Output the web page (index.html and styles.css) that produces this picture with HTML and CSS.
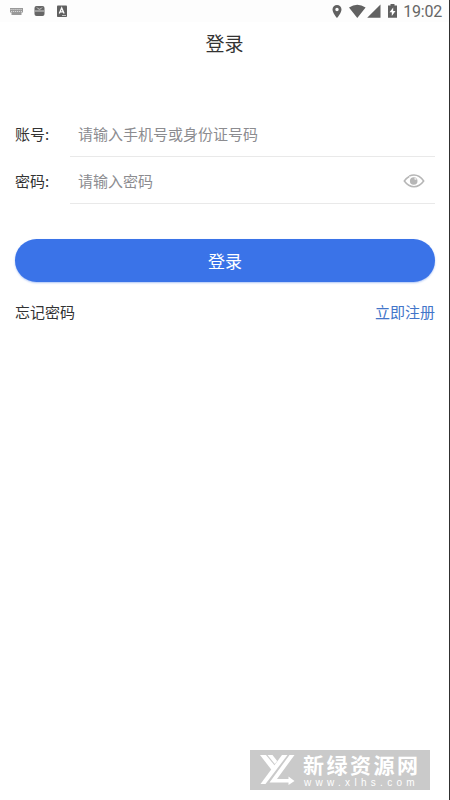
FILE: index.html
```html
<!DOCTYPE html>
<html lang="zh-CN">
<head>
<meta charset="utf-8">
<title>登录</title>
<link rel="stylesheet" href="styles.css">
</head>
<body>
<div class="screen">
  <header class="status">
    <svg class="notices" width="70" height="22" viewBox="0 0 70 22">
      <path fill="#999" d="M10 8h13v4.500h-1.500v2.500h-10v-2.500H10z"/>
      <path stroke="#fff" stroke-width=".6" stroke-dasharray="1.200 .8" d="M10.500 9.500h12M11 11.500h11"/>
      <rect x="34.500" y="6" width="10" height="10" rx="2" fill="#666"/>
      <path fill="none" stroke="#ddd" stroke-width=".9" d="M37 7.500q2.500 3.500 5 0M35 11h9"/>
      <rect x="57" y="5.500" width="10" height="11.500" rx=".8" fill="#606060"/>
      <path fill="none" stroke="#fff" stroke-width="1.300" d="M59.300 13.500 61.700 8l2.400 5.500M60.200 11.800h3"/>
      <path stroke="#ddd" stroke-width=".8" d="M62 15.500h4"/>
    </svg>
    <div class="system">
      <svg width="68" height="22" viewBox="332 0 68 22" fill="#616161">
        <path fill-rule="evenodd" d="M337 5a4.500 4.500 0 0 0-4.500 4.500c0 3.300 4.500 8.500 4.500 8.500s4.500-5.200 4.500-8.500A4.500 4.500 0 0 0 337 5m0 2.800a1.700 1.700 0 1 1 0 3.400 1.700 1.700 0 0 1 0-3.400"/>
        <path d="M349 7.500q8.300-5.700 16.600 0L357.300 18zM380.500 4.500v13.300H367.200z"/>
        <path d="M388 5.500h2.500V4h4v1.500h2.500v12.300h-9z"/>
        <path fill="#fff" d="m393.200 7.500-3.700 4.700h2.300v3.800l3.700-5h-2.300z"/>
      </svg>
      <span class="clock">19:02</span>
    </div>
  </header>
  <h1 class="title">登录</h1>
  <form class="form">
    <div class="row">
      <label class="label">账号:</label>
      <div class="field">请输入手机号或身份证号码</div>
    </div>
    <div class="row">
      <label class="label">密码:</label>
      <div class="field">请输入密码
        <svg class="eye" width="22" height="16" viewBox="0 0 22 16">
          <path fill="none" stroke="#b6b6b6" stroke-width="1.500" d="M6.200 3.500Q3.400 5.100 1.300 8q4.100 5.700 9.700 5.700T20.700 8Q16.600 2 11 2q-2.400 0-4.700 1"/>
          <circle cx="10.700" cy="8" r="3.800" fill="#b6b6b6"/>
          <circle cx="12.500" cy="5.800" r="1.200" fill="#e6e6e6"/>
        </svg>
      </div>
    </div>
    <button class="submit" type="button">登录</button>
  </form>
  <nav class="links"><span>忘记密码</span><span class="register">立即注册</span></nav>
  <aside class="watermark">
    <svg width="36" height="32" viewBox="0 0 36 32" fill="#fff">
      <path d="M0 1h6L15.500 12.500l-3.500 4z"/>
      <path d="M7.500 1h5l4.700 6-2.400 3z"/>
      <path d="M22 1h5.500L5.500 30H.5z"/>
      <path d="M29.500 1h5L17 25h11.500V22.500l6 4.500-6 4v-2.500H9.500z"/>
    </svg>
    <div class="brand">
      <div class="brand-name">新绿资源网</div>
      <div class="brand-url">www.xlhs.com</div>
    </div>
  </aside>
</div>
</body>
</html>
```
FILE: styles.css
```css
* {
  box-sizing: border-box;
}

body {
  margin: 0;
  background: #fff;
  font-family: "Noto Sans CJK SC", sans-serif;
  color: #333;
}

.screen {
  display: flex;
  flex-direction: column;
  width: 450px;
  height: 800px;
  border-right: 1px solid #303030;
  overflow: hidden;
}

.status {
  display: flex;
  justify-content: space-between;
  height: 22px;
  background: #fdfdfd;
}

.system {
  display: flex;
  gap: 3px;
  padding-right: 7px;
}

.system svg {
  overflow: visible;
}

.clock {
  font: 16px/23px Roboto, sans-serif;
  letter-spacing: -0.2px;
  color: #666;
}

.title {
  margin: 0;
  height: 42px;
  font-size: 19px;
  font-weight: 400;
  line-height: 42px;
  text-align: center;
}

.form {
  display: flex;
  flex-direction: column;
  padding: 46px 14px 0 15px;
}

.row {
  display: flex;
  height: 47px;
  font-size: 15px;
  line-height: 48px;
}

.label {
  width: 55px;
}

.field {
  display: flex;
  flex: 1;
  align-items: center;
  justify-content: space-between;
  padding: 2px 10px 0 8px;
  border-bottom: 1px solid #e9e9e9;
  color: #8c8c90;
}

.submit {
  height: 43px;
  margin: 35px 0 0;
  padding: 0;
  border: 0;
  border-radius: 22px;
  background: #3a73e8;
  box-shadow: 0 1px 2px #3a73e866;
  color: #fff;
  font: 17px/43px "Noto Sans CJK SC", sans-serif;
}

.links {
  display: flex;
  justify-content: space-between;
  padding: 18px 14px 0 15px;
  font-size: 15px;
  line-height: 24px;
}

.register {
  color: #4275c9;
}

.watermark {
  display: flex;
  gap: 7px;
  width: 180px;
  height: 40px;
  margin: auto 19px 10px auto;
  padding: 4px 0 0 10px;
  background: #cacaca;
  color: #fff;
}

.brand-name {
  height: 24px;
  font-size: 21px;
  font-weight: 700;
  line-height: 20px;
  letter-spacing: 2.5px;
}

.brand-url {
  font: 10px/9px "Liberation Sans", sans-serif;
  letter-spacing: 4.3px;
  padding-left: 1px;
}
```
